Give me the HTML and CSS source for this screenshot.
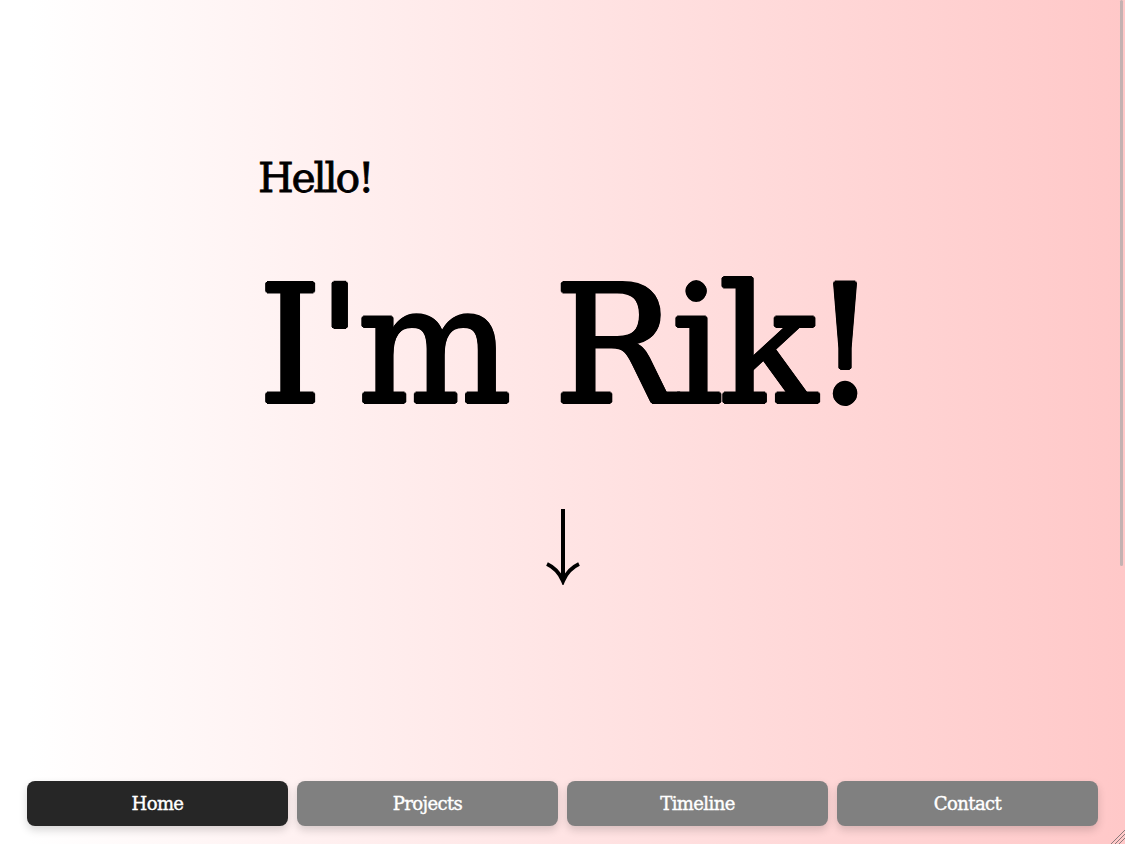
FILE: index.html
```html
<!DOCTYPE html>
<html lang="en">
<head>
<meta charset="utf-8">
<title>Rik</title>
<link rel="stylesheet" href="styles.css">
</head>
<body>
<div class="page">
  <main class="hero">
    <div class="intro">
      <h2 class="hello">Hello!</h2>
      <h1 class="name">I'm Rik!</h1>
    </div>
    <div class="arrow" aria-label="scroll down">
      <svg width="36" height="76" viewBox="0 0 36 76" fill="none" stroke="#000" stroke-width="4">
        <path d="M18 0 V71"/>
        <path d="M2 55 Q13 60 18 72 Q23 60 34 55"/>
      </svg>
    </div>
  </main>
  <nav class="nav">
    <a class="btn active" href="#">Home</a>
    <a class="btn" href="#">Projects</a>
    <a class="btn" href="#">Timeline</a>
    <a class="btn" href="#">Contact</a>
  </nav>
  <div class="scroll-thumb"></div>
  <svg class="grip" width="16" height="16" viewBox="0 0 16 16" stroke="#8a7a7a" stroke-width="1">
    <path d="M16 2 L2 16 M16 6 L6 16 M16 10 L10 16"/>
  </svg>
</div>
</body>
</html>
```
FILE: styles.css
```css
* { box-sizing: border-box; }
html, body { margin: 0; padding: 0; }
body {
  font-family: "Roboto Slab", "DejaVu Serif", "Liberation Serif", serif;
  color: #000;
}
.page {
  position: relative;
  height: 844px;
  display: flex;
  flex-direction: column;
  background: linear-gradient(to right, #ffffff 2.5%, #ffc8c8 100%);
  overflow: hidden;
}
.hero {
  flex: 1;
  display: flex;
  flex-direction: column;
  padding-top: 158px;
}
.intro {
  width: 609px;
  margin: 0 auto;
}
.hello {
  margin: 0;
  font-size: 41px;
  font-weight: 400;
  line-height: 1;
  letter-spacing: -2.2px;
  -webkit-text-stroke: 0.8px #000;
}
.name {
  margin: 65px 0 0 0;
  font-size: 163px;
  font-weight: 400;
  line-height: 1;
  letter-spacing: -5px;
  white-space: nowrap;
  text-shadow:
    1.8px 0 0 #000, -1.8px 0 0 #000, 0 1.8px 0 #000, 0 -1.8px 0 #000,
    1.3px 1.3px 0 #000, -1.3px 1.3px 0 #000, 1.3px -1.3px 0 #000, -1.3px -1.3px 0 #000;
}
.arrow {
  display: flex;
  justify-content: center;
  margin-top: 82px;
}
.nav {
  display: flex;
  gap: 9px;
  padding: 0 27px 18px;
}
.btn {
  flex: 1;
  height: 45px;
  display: flex;
  align-items: center;
  justify-content: center;
  border-radius: 8px;
  background: #808080;
  color: #fff;
  text-decoration: none;
  font-size: 18px;
  letter-spacing: -0.6px;
  -webkit-text-stroke: 0.4px #fff;
  box-shadow: 0 4px 8px rgba(0, 0, 0, 0.16);
}
.btn.active { background: #262626; }
.scroll-thumb {
  position: absolute;
  top: 0;
  right: 2px;
  width: 3px;
  height: 566px;
  background: #c4b2b2;
  border-radius: 2px;
}
.grip {
  position: absolute;
  right: 0;
  bottom: 0;
}
```
